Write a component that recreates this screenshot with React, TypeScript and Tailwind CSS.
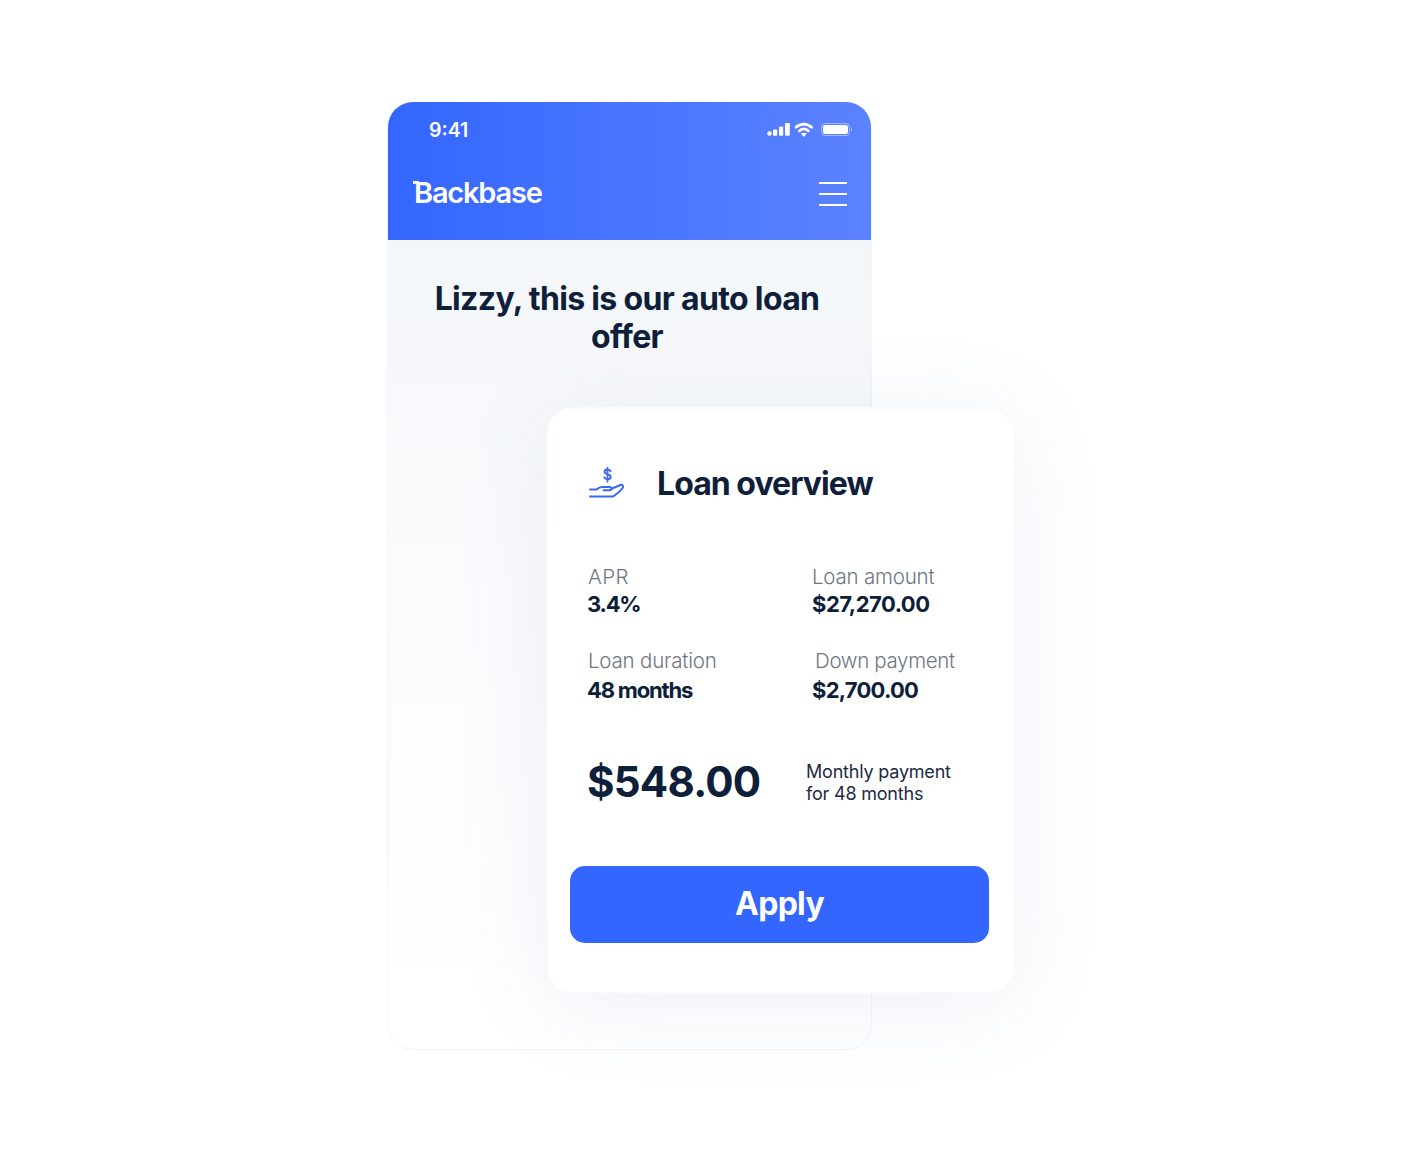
const Stat = ({ label, value, labelClass = "", valueClass = "", rowClass = "" }: { label: string; value: string; labelClass?: string; valueClass?: string; rowClass?: string }) => (
  <div className={rowClass}>
    <div className={`text-[20.500px] leading-[26px] font-light text-[#6f7683] ${labelClass}`}>{label}</div>
    <div className={`text-[22px] leading-[26px] font-bold text-[#0e2039] ${valueClass}`}>{value}</div>
  </div>
);

const StatusIcons = () => (
  <svg width="85" height="16" viewBox="0 0 85 16" fill="none">
    <circle cx="2.500" cy="11.500" r="2.300" fill="white" />
    <rect x="6" y="7.500" width="4.200" height="6.300" rx="1" fill="white" />
    <rect x="12" y="4.500" width="4.200" height="9.300" rx="1" fill="white" />
    <rect x="18" y="1" width="4.800" height="12.800" rx="1" fill="white" />
    <path d="M29 5.300c4.600-4.200 11-4.200 15.600 0" stroke="white" strokeWidth="2.800" strokeLinecap="round" />
    <path d="M32.200 8.900c2.800-2.400 6.400-2.400 9.200 0" stroke="white" strokeWidth="2.600" strokeLinecap="round" />
    <path d="M36.800 15l-3-3.400c1.800-1.300 4.200-1.300 6 0z" fill="white" />
    <rect x="54.500" y="1.500" width="28" height="12" rx="3.500" stroke="white" strokeOpacity="0.45" />
    <rect x="56" y="3" width="25" height="9" rx="2.200" fill="white" />
    <path d="M84 5.500c.8.300 1 1.200 1 2s-.2 1.700-1 2z" fill="white" fillOpacity="0.5" />
  </svg>
);

const HandIcon = () => (
  <svg width="36" height="34" viewBox="0 0 36 34" fill="none" stroke="#3d68f0" strokeWidth="2" strokeLinecap="round" strokeLinejoin="round">
    <path d="M21.500 4.200c-.6-1.200-1.700-1.700-3-1.700-1.600 0-2.900.8-2.900 2.300 0 3.200 6.100 1.700 6.100 5 0 1.500-1.400 2.400-3.100 2.400-1.500 0-2.700-.6-3.300-1.900" />
    <path d="M18.500.8v14" strokeWidth="1.700" />
    <path d="M1 22.500h6.500c1.800-1.800 3.700-2.600 6-2.600h7c1.300 0 2 .8 2 1.700s-.8 1.700-2 1.700h-6" />
    <path d="M23 21.500l8.500-3.500c1.800-.7 3.500 1.200 2.300 2.800-2.500 3-6 6.300-8.800 8-1 .6-1.800.7-3 .7H1" />
  </svg>
);

export default function App() {
  return (
    <div className="min-h-[1151px] bg-white pl-[387px] pt-[102px] font-['Inter',sans-serif]">
      <div className="relative h-[948px] w-[485px] rounded-[26px] border border-[#f1f4f8] bg-gradient-to-b from-[#f1f5f8] via-[#fafbfd] to-white">
        <header className="-mt-px h-[138px] overflow-hidden rounded-t-[25px] bg-gradient-to-r from-[#3366ff] to-[#5b82ff] pl-[25px] pr-[24px]">
          <div className="-mr-[5px] flex items-center justify-between pl-4 pt-[15px]">
            <span className="text-[19.500px] leading-[26px] font-semibold text-white">9:41</span>
            <StatusIcons />
          </div>
          <div className="mt-[30px] flex items-center justify-between">
            <span className="relative pl-[1px] text-[29px] leading-[40px] font-semibold tracking-[-1.2px] text-white">
              Backbase
              <span className="absolute left-0 top-[8px] h-[3px] w-[6px] bg-white" />
            </span>
            <div className="mt-px flex w-[28px] flex-col gap-[9px]">
              <div className="h-[2px] bg-white" />
              <div className="h-[2px] bg-white" />
              <div className="h-[2px] bg-white" />
            </div>
          </div>
        </header>

        <h1 className="ml-[29px] mt-[40px] w-[420px] text-center text-[32px] leading-[38px] font-bold tracking-[-0.66px] text-[#0e2039]">
          Lizzy, this is our auto loan offer
        </h1>

        {/* loan card sits over the phone */}
        <section className="absolute left-[158px] top-[304px] h-[587px] w-[469px] rounded-[26px] border-2 border-[#f8fafc] bg-white px-[22px] shadow-[0_10px_90px_rgba(90,120,180,0.1)]">
          <div className="flex items-center gap-[32px] pl-[19px] pt-[55px]">
            <HandIcon />
            <h2 className="text-[32px] leading-[40px] font-bold tracking-[-0.95px] text-[#0e2039]">Loan overview</h2>
          </div>

          <div className="mt-[60px] grid grid-cols-[225px_1fr] pl-[17px]">
            <Stat label="APR" value="3.4%" labelClass="ml-px tracking-[0.4px]" valueClass="mt-px tracking-[-1.2px]" />
            <Stat label="Loan amount" value="$27,270.00" labelClass="tracking-[-0.2px]" valueClass="mt-px tracking-[-0.5px]" />
            <Stat label="Loan duration" value="48 months" rowClass="mt-[31px]" labelClass="ml-px tracking-[-0.2px]" valueClass="mt-[3px] tracking-[-1.2px]" />
            <Stat label="Down payment" value="$2,700.00" labelClass="ml-[3px] tracking-[-0.35px]" rowClass="mt-[31px]" valueClass="mt-[3px] tracking-[-0.75px]" />
          </div>

          <div className="mt-[51px] flex items-center pl-[17px]">
            <div className="w-[219px] text-[42px] leading-[56px] font-bold tracking-[-0.75px] text-[#0e2039]">$548.00</div>
            <p className="mt-[2px] text-[18px] leading-[22px] font-normal tracking-[-0.2px] text-[#1c2b42]">
              Monthly payment
              <br />
              for 48 months
            </p>
          </div>

          <button className="mt-[56px] flex h-[77px] w-[419px] items-center justify-center rounded-[15px] bg-[#3366ff] pb-[2px] text-[32px] font-bold tracking-[-0.7px] text-white">
            Apply
          </button>
        </section>
      </div>
    </div>
  );
}
